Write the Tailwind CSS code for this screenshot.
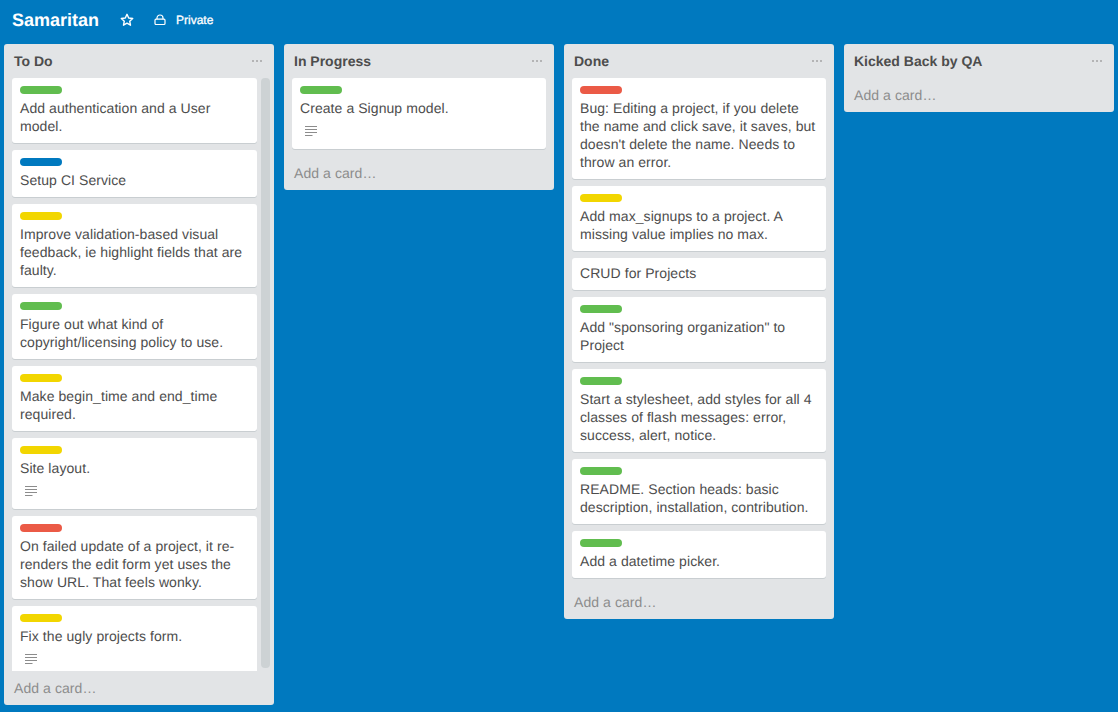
<!DOCTYPE html>
<html lang="en">
<head>
  <meta charset="UTF-8" />
  <title>Samaritan</title>
  <script src="https://cdn.jsdelivr.net/npm/@tailwindcss/browser@4"></script>
</head>
<body class="bg-[#0079bf] text-[#4d4d4d] font-['Liberation_Sans',Arial,sans-serif] text-[14px] leading-[18px] tracking-[0.07px] [text-rendering:geometricPrecision] h-[712px] overflow-hidden">

  <!-- Board header -->
  <header class="h-[44px] flex items-center pl-[12px] pb-[4px] text-white tracking-normal">
    <h1 class="text-[18px] leading-[24px] font-bold w-[108px]">Samaritan</h1>
    <svg class="w-[14px] h-[14px]" viewBox="0 0 14 14" fill="none" stroke="white" stroke-width="1.4" stroke-linejoin="round"><path d="M7 1.3l1.7 3.7 4 .5-3 2.7.8 4L7 10.2l-3.5 2 .8-4-3-2.7 4-.5z"/></svg>
    <svg class="w-[12px] h-[12px] ml-[20px]" viewBox="0 0 12 12" fill="none" stroke="white" stroke-width="1.2"><rect x="1" y="5.2" width="10" height="5.3" rx="1"/><path d="M3 5.2V4a3 3 0 0 1 6 0v1.2"/></svg>
    <span class="text-[12px] [-webkit-text-stroke:0.3px_white] ml-[10px]">Private</span>
  </header>

  <!-- Lists -->
  <main class="flex items-start gap-[10px] pl-[4px]">

    <!-- To Do -->
    <section class="w-[270px] h-[661px] bg-[#e2e4e6] rounded-[3px] flex flex-col">
      <div class="h-[34px] flex items-center justify-between pl-[10px] pr-[12px] font-bold tracking-normal"><span>To Do</span><svg class="w-[10px] h-[2px]" viewBox="0 0 10 2" fill="#a5a5a5"><circle cx="1" cy="1" r="1"/><circle cx="5" cy="1" r="1"/><circle cx="9" cy="1" r="1"/></svg></div>
      <div class="flex flex-1 min-h-0 pl-[8px]">
        <div class="w-[245px] overflow-hidden flex flex-col gap-[7px]">
          <article class="bg-white rounded-[3px] shadow-[0_1px_0_#c9ced1] px-[8px] pt-[8px] pb-[8px] shrink-0">
            <div class="w-[42px] h-[8px] rounded-[4px] bg-[#61bd4f] mb-[5px]"></div>
            <p>Add authentication and a User model.</p>
          </article>
          <article class="bg-white rounded-[3px] shadow-[0_1px_0_#c9ced1] px-[8px] pt-[8px] pb-[8px] shrink-0">
            <div class="w-[42px] h-[8px] rounded-[4px] bg-[#0079bf] mb-[5px]"></div>
            <p>Setup CI Service</p>
          </article>
          <article class="bg-white rounded-[3px] shadow-[0_1px_0_#c9ced1] px-[8px] pt-[8px] pb-[8px] shrink-0">
            <div class="w-[42px] h-[8px] rounded-[4px] bg-[#f2d600] mb-[5px]"></div>
            <p>Improve validation-based visual feedback, ie highlight fields that are faulty.</p>
          </article>
          <article class="bg-white rounded-[3px] shadow-[0_1px_0_#c9ced1] px-[8px] pt-[8px] pb-[8px] shrink-0">
            <div class="w-[42px] h-[8px] rounded-[4px] bg-[#61bd4f] mb-[5px]"></div>
            <p>Figure out what kind of copyright/licensing policy to use.</p>
          </article>
          <article class="bg-white rounded-[3px] shadow-[0_1px_0_#c9ced1] px-[8px] pt-[8px] pb-[8px] shrink-0">
            <div class="w-[42px] h-[8px] rounded-[4px] bg-[#f2d600] mb-[5px]"></div>
            <p>Make begin_time and end_time required.</p>
          </article>
          <article class="bg-white rounded-[3px] shadow-[0_1px_0_#c9ced1] px-[8px] pt-[8px] pb-[8px] shrink-0">
            <div class="w-[42px] h-[8px] rounded-[4px] bg-[#f2d600] mb-[5px]"></div>
            <p>Site layout.</p>
            <svg class="w-[12px] h-[12px] mt-[8px] ml-[5px] mb-[4px]" viewBox="0 0 12 12" fill="#8c8c8c"><rect y="1" width="12" height="1"/><rect y="4" width="12" height="1"/><rect y="7" width="12" height="1"/><rect y="10" width="7.5" height="1"/></svg>
          </article>
          <article class="bg-white rounded-[3px] shadow-[0_1px_0_#c9ced1] px-[8px] pt-[8px] pb-[8px] shrink-0">
            <div class="w-[42px] h-[8px] rounded-[4px] bg-[#eb5a46] mb-[5px]"></div>
            <p>On failed update of a project, it re-renders the edit form yet uses the show URL. That feels wonky.</p>
          </article>
          <article class="bg-white rounded-[3px] shadow-[0_1px_0_#c9ced1] px-[8px] pt-[8px] pb-[8px] shrink-0">
            <div class="w-[42px] h-[8px] rounded-[4px] bg-[#f2d600] mb-[5px]"></div>
            <p>Fix the ugly projects form.</p>
            <svg class="w-[12px] h-[12px] mt-[8px] ml-[5px] mb-[4px]" viewBox="0 0 12 12" fill="#8c8c8c"><rect y="1" width="12" height="1"/><rect y="4" width="12" height="1"/><rect y="7" width="12" height="1"/><rect y="10" width="7.5" height="1"/></svg>
          </article>
        </div>
        <div class="w-[9px] ml-[4px] mb-[3px] rounded-[4px] bg-[#cdd2d4]"></div>
      </div>
      <div class="h-[34px] shrink-0 flex items-center pl-[10px] text-[#8c8c8c]">Add a card…</div>
    </section>

    <!-- In Progress -->
    <section class="w-[270px] bg-[#e2e4e6] rounded-[3px] flex flex-col">
      <div class="h-[34px] flex items-center justify-between pl-[10px] pr-[12px] font-bold tracking-normal"><span>In Progress</span><svg class="w-[10px] h-[2px]" viewBox="0 0 10 2" fill="#a5a5a5"><circle cx="1" cy="1" r="1"/><circle cx="5" cy="1" r="1"/><circle cx="9" cy="1" r="1"/></svg></div>
      <div class="px-[8px] flex flex-col gap-[7px]">
        <article class="w-[254px] bg-white rounded-[3px] shadow-[0_1px_0_#c9ced1] px-[8px] pt-[8px] pb-[8px]">
          <div class="w-[42px] h-[8px] rounded-[4px] bg-[#61bd4f] mb-[5px]"></div>
          <p>Create a Signup model.</p>
          <svg class="w-[12px] h-[12px] mt-[8px] ml-[5px] mb-[4px]" viewBox="0 0 12 12" fill="#8c8c8c"><rect y="1" width="12" height="1"/><rect y="4" width="12" height="1"/><rect y="7" width="12" height="1"/><rect y="10" width="7.5" height="1"/></svg>
        </article>
      </div>
      <div class="h-[34px] mt-[7px] flex items-center pl-[10px] text-[#8c8c8c]">Add a card…</div>
    </section>

    <!-- Done -->
    <section class="w-[270px] bg-[#e2e4e6] rounded-[3px] flex flex-col">
      <div class="h-[34px] flex items-center justify-between pl-[10px] pr-[12px] font-bold tracking-normal"><span>Done</span><svg class="w-[10px] h-[2px]" viewBox="0 0 10 2" fill="#a5a5a5"><circle cx="1" cy="1" r="1"/><circle cx="5" cy="1" r="1"/><circle cx="9" cy="1" r="1"/></svg></div>
      <div class="px-[8px] flex flex-col gap-[7px]">
        <article class="w-[254px] bg-white rounded-[3px] shadow-[0_1px_0_#c9ced1] px-[8px] pt-[8px] pb-[8px]">
          <div class="w-[42px] h-[8px] rounded-[4px] bg-[#eb5a46] mb-[5px]"></div>
          <p>Bug: Editing a project, if you delete the name and click save, it saves, but doesn't delete the name. Needs to throw an error.</p>
        </article>
        <article class="w-[254px] bg-white rounded-[3px] shadow-[0_1px_0_#c9ced1] px-[8px] pt-[8px] pb-[8px]">
          <div class="w-[42px] h-[8px] rounded-[4px] bg-[#f2d600] mb-[5px]"></div>
          <p>Add max_signups to a project. A missing value implies no max.</p>
        </article>
        <article class="w-[254px] bg-white rounded-[3px] shadow-[0_1px_0_#c9ced1] px-[8px] pt-[6px] pb-[8px]">
          <p>CRUD for Projects</p>
        </article>
        <article class="w-[254px] bg-white rounded-[3px] shadow-[0_1px_0_#c9ced1] px-[8px] pt-[8px] pb-[8px]">
          <div class="w-[42px] h-[8px] rounded-[4px] bg-[#61bd4f] mb-[5px]"></div>
          <p>Add "sponsoring organization" to Project</p>
        </article>
        <article class="w-[254px] bg-white rounded-[3px] shadow-[0_1px_0_#c9ced1] px-[8px] pt-[8px] pb-[8px]">
          <div class="w-[42px] h-[8px] rounded-[4px] bg-[#61bd4f] mb-[5px]"></div>
          <p>Start a stylesheet, add styles for all 4 classes of flash messages: error, success, alert, notice.</p>
        </article>
        <article class="w-[254px] bg-white rounded-[3px] shadow-[0_1px_0_#c9ced1] px-[8px] pt-[8px] pb-[8px]">
          <div class="w-[42px] h-[8px] rounded-[4px] bg-[#61bd4f] mb-[5px]"></div>
          <p>README. Section heads: basic description, installation, contribution.</p>
        </article>
        <article class="w-[254px] bg-white rounded-[3px] shadow-[0_1px_0_#c9ced1] px-[8px] pt-[8px] pb-[8px]">
          <div class="w-[42px] h-[8px] rounded-[4px] bg-[#61bd4f] mb-[5px]"></div>
          <p>Add a datetime picker.</p>
        </article>
      </div>
      <div class="h-[34px] mt-[7px] flex items-center pl-[10px] text-[#8c8c8c]">Add a card…</div>
    </section>

    <!-- Kicked Back by QA -->
    <section class="w-[270px] bg-[#e2e4e6] rounded-[3px] flex flex-col">
      <div class="h-[34px] flex items-center justify-between pl-[10px] pr-[12px] font-bold tracking-normal"><span>Kicked Back by QA</span><svg class="w-[10px] h-[2px]" viewBox="0 0 10 2" fill="#a5a5a5"><circle cx="1" cy="1" r="1"/><circle cx="5" cy="1" r="1"/><circle cx="9" cy="1" r="1"/></svg></div>
      <div class="h-[34px] flex items-center pl-[10px] text-[#8c8c8c]">Add a card…</div>
    </section>

  </main>
</body>
</html>
